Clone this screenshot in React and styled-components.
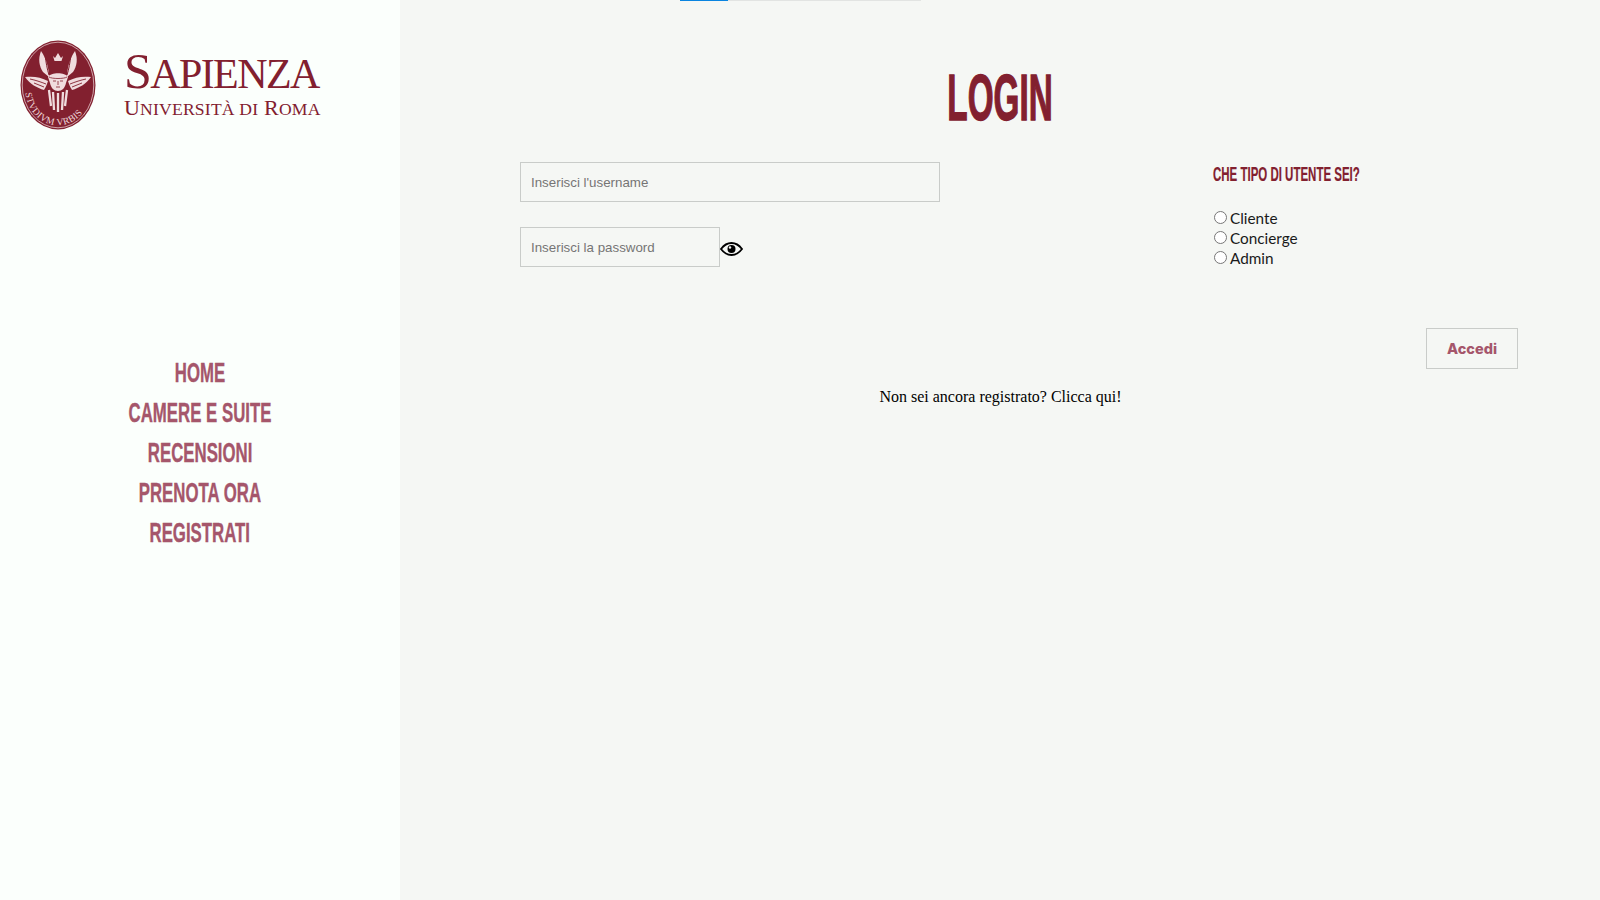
import React from 'react'
import styled, { createGlobalStyle } from 'styled-components'

const GlobalStyle = createGlobalStyle`
  html, body {
    margin: 0;
    padding: 0;
    height: 100%;
    background: #f5f7f4;
  }
`

const Page = styled.div`
  display: flex;
  width: 100%;
  height: 900px;
  overflow: hidden;
`

const Sidebar = styled.aside`
  width: 400px;
  flex-shrink: 0;
  background: #fbfffc;
  display: flex;
  flex-direction: column;
`

const LogoRow = styled.div`
  display: flex;
  align-items: flex-start;
  padding: 40px 0 0 20px;
  height: 90px;
  color: #82202f;
`

const LogoText = styled.div`
  margin-left: 28px;
  padding-top: 8px;
  font-family: "Liberation Serif", serif;
`

const LogoName = styled.div`
  font-size: ${p => p.$big}px;
  line-height: ${p => p.$line}px;
  letter-spacing: ${p => p.$spacing}px;
  white-space: nowrap;

  span {
    font-size: ${p => p.$cap}px;
  }
`

const Nav = styled.nav`
  margin-top: 223px;
  display: flex;
  flex-direction: column;
  align-items: center;
`

const NavLink = styled.a`
  font-family: "Liberation Sans", sans-serif;
  font-weight: 700;
  font-size: 28px;
  line-height: 40px;
  color: #a5566b;
  transform: scaleX(0.6);
  -webkit-text-stroke: 0.4px #a5566b;
  white-space: nowrap;
`

const Main = styled.main`
  flex: 1;
  display: flex;
  flex-direction: column;
`

const ProgressTrack = styled.div`
  margin-left: 280px;
  width: 241px;
  height: 1px;
  background: #e2e4e2;
`

const ProgressFill = styled.div`
  width: 48px;
  height: 100%;
  background: #0a84e0;
`

const Title = styled.h1`
  margin: 61px 0 0;
  height: 100px;
  font-family: "Liberation Sans", sans-serif;
  font-weight: 700;
  font-size: 64px;
  line-height: 72px;
  text-align: center;
  color: #82202f;
  transform: scaleX(0.52);
  -webkit-text-stroke: 1.4px #82202f;
`

const FormArea = styled.div`
  padding: 0 82px 0 120px;
`

const FormRow = styled.div`
  display: flex;
  justify-content: space-between;
`

const Fields = styled.div`
  display: flex;
  flex-direction: column;
  gap: 25px;
`

const Input = styled.input`
  box-sizing: border-box;
  display: block;
  width: ${p => p.$width}px;
  height: 40px;
  padding: 0 10px;
  background: transparent;
  border: 1px solid #c9ccc9;
  font-family: "Liberation Sans", sans-serif;
  font-size: 13.33px;
  outline: none;

  &::placeholder {
    color: #757575;
    opacity: 1;
  }
`

const PasswordRow = styled.div`
  display: flex;
  align-items: center;
`

const EyeButton = styled.span`
  display: flex;
  margin-top: 4px;
`

const UserType = styled.div`
  width: 305px;
`

const UserTypeTitle = styled.h2`
  margin: 0 0 22px;
  font-family: "Liberation Sans", sans-serif;
  font-weight: 700;
  font-size: 21px;
  line-height: 24px;
  color: #82202f;
  transform: scaleX(0.547);
  transform-origin: left center;
  -webkit-text-stroke: 0.2px #82202f;
  white-space: nowrap;
`

const RadioLabel = styled.label`
  display: flex;
  align-items: center;
  height: 20px;
  font-family: Lato, sans-serif;
  font-size: 15.3px;
  color: #1a1a1a;
`

const Radio = styled.input`
  width: 13px;
  height: 13px;
  margin: 0 3px 1px 1px;
`

const Actions = styled.div`
  display: flex;
  justify-content: flex-end;
  margin-top: 60px;
`

const Button = styled.button`
  box-sizing: border-box;
  width: 92px;
  height: 41px;
  background: transparent;
  border: 1px solid #c9ccc9;
  font-family: Inter, sans-serif;
  font-weight: 800;
  font-size: 14.5px;
  color: #a5566b;
`

const RegisterText = styled.p`
  margin: 9px 0 0;
  padding-left: 1px;
  font-family: "Liberation Serif", serif;
  font-size: 16px;
  line-height: 38px;
  text-align: center;
  color: #000;
`

const Seal = () => (
  <svg width="76" height="90" viewBox="0 0 76 90">
    <ellipse cx="38" cy="45" rx="37.5" ry="44.5" fill="#82202f" />
    <ellipse cx="38" cy="45" rx="35.8" ry="42.8" fill="none" stroke="#f0dcde" strokeWidth="0.7" />
    {/* corona */}
    <path d="M33 16l2 2 3-5 3 5 2-2-1.500 5h-7z" fill="#f0dcde" />
    {/* ali alte */}
    <path d="M21 11c-3 8-2 15 2 21l6 5c0-9-3-19-8-26z" fill="#f0dcde" />
    <path d="M25 15c1 7 2 14 4 20" stroke="#82202f" strokeWidth="1" fill="none" />
    <path d="M55 11c3 8 2 15-2 21l-6 5c0-9 3-19 8-26z" fill="#f0dcde" />
    <path d="M51 15c-1 7-2 14-4 20" stroke="#82202f" strokeWidth="1" fill="none" />
    {/* ali laterali */}
    <path d="M5 37c8-1 16 0 23 4-1 3-2 6-4 9-7-2-14-6-19-13z" fill="#f0dcde" />
    <path d="M10 39c5 1 11 3 16 5M14 43c3 1 7 3 10 4" stroke="#82202f" strokeWidth="0.9" fill="none" />
    <path d="M71 37c-8-1-16 0-23 4 1 3 2 6 4 9 7-2 14-6 19-13z" fill="#f0dcde" />
    <path d="M66 39c-5 1-11 3-16 5M62 43c-3 1-7 3-10 4" stroke="#82202f" strokeWidth="0.9" fill="none" />
    {/* volto */}
    <path d="M28 37c3-5 17-5 20 0l-2 6c-1 5-4 8-8 8s-7-3-8-8z" fill="#f0dcde" />
    <path d="M33 41h3M40 41h3M38 41v4M36 47h4" stroke="#82202f" strokeWidth="0.8" fill="none" />
    <path d="M29 37c3 2 15 2 18 0" stroke="#82202f" strokeWidth="0.8" fill="none" />
    {/* piume basse */}
    <path d="M29 50l2 16M33 52l1 18M38 53v19M43 52l-1 18M47 50l-2 16" stroke="#f0dcde" strokeWidth="2.3" fill="none" />
    <path id="sealCurve" d="M5 50C7 72 21 85 38 85S69 72 71 50" fill="none" />
    <text fontFamily="Liberation Serif, serif" fontSize="9.500" letterSpacing="0.4" fill="#f0dcde">
      <textPath href="#sealCurve" startOffset="3">STVDIVM VRBIS</textPath>
    </text>
  </svg>
)

const EyeIcon = () => (
  <svg width="23" height="14" viewBox="0 0 23 14">
    <path d="M1 7c3-4 6.500-6 10.500-6s7.500 2 10.500 6c-3 4-6.500 6-10.500 6S4 11 1 7z" fill="none" stroke="#000" strokeWidth="1.8" />
    <circle cx="11.500" cy="7" r="4" fill="#000" />
    <circle cx="10" cy="5.500" r="1.200" fill="#f5f7f4" />
  </svg>
)

const navItems = ['Home', 'Camere e suite', 'Recensioni', 'Prenota ora', 'Registrati']

const App = () => {
  return (
    <Page>
      <GlobalStyle />
      <Sidebar>
        <LogoRow>
          <Seal />
          <LogoText>
            <LogoName $big={50} $cap={42} $line={46} $spacing={-1.6}>S<span>APIENZA</span></LogoName>
            <LogoName $big={22} $cap={17.6} $line={22} $spacing={0.2}>U<span>NIVERSITÀ DI</span> R<span>OMA</span></LogoName>
          </LogoText>
        </LogoRow>
        <Nav>
          {navItems.map(item => (
            <NavLink key={item}>{item.toUpperCase()}</NavLink>
          ))}
        </Nav>
      </Sidebar>
      <Main>
        <ProgressTrack>
          <ProgressFill />
        </ProgressTrack>
        <Title>LOGIN</Title>
        <FormArea>
          <FormRow>
            <Fields>
              <Input $width={420} placeholder="Inserisci l'username" />
              <PasswordRow>
                <Input $width={200} placeholder="Inserisci la password" />
                <EyeButton><EyeIcon /></EyeButton>
              </PasswordRow>
            </Fields>
            <UserType>
              <UserTypeTitle>CHE TIPO DI UTENTE SEI?</UserTypeTitle>
              <RadioLabel><Radio type="radio" name="tipo" />Cliente</RadioLabel>
              <RadioLabel><Radio type="radio" name="tipo" />Concierge</RadioLabel>
              <RadioLabel><Radio type="radio" name="tipo" />Admin</RadioLabel>
            </UserType>
          </FormRow>
          <Actions>
            <Button>Accedi</Button>
          </Actions>
        </FormArea>
        <RegisterText>Non sei ancora registrato? Clicca qui!</RegisterText>
      </Main>
    </Page>
  )
}

export default App
